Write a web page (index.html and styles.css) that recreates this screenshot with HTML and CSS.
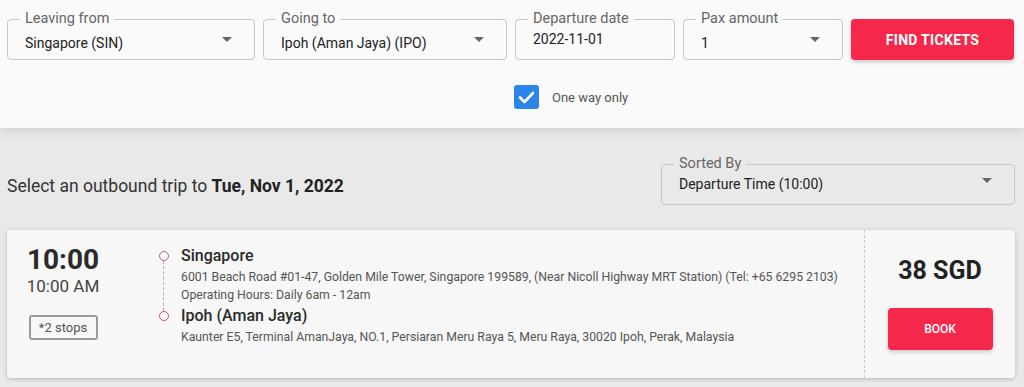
FILE: index.html
```html
<!DOCTYPE html>
<html lang="en">

<head>
    <meta charset="UTF-8">
    <meta name="viewport" content="width=device-width, initial-scale=1.0">
    <title>Find tickets</title>
    <link rel="stylesheet" href="styles.css">
</head>

<body>
    <div class="search">
        <form class="search-form">
            <fieldset class="field">
                <legend>Leaving from</legend>
                <div class="field-value">
                    <span>Singapore (SIN)</span>
                    <svg class="arrow" viewBox="0 0 10 5"><path d="M0 0l5 5 5-5z"/></svg>
                </div>
            </fieldset>
            <fieldset class="field">
                <legend>Going to</legend>
                <div class="field-value">
                    <span>Ipoh (Aman Jaya) (IPO)</span>
                    <svg class="arrow" viewBox="0 0 10 5"><path d="M0 0l5 5 5-5z"/></svg>
                </div>
            </fieldset>
            <fieldset class="field">
                <legend>Departure date</legend>
                <div class="field-value date">
                    <span>2022-11-01</span>
                </div>
            </fieldset>
            <fieldset class="field">
                <legend>Pax amount</legend>
                <div class="field-value">
                    <span>1</span>
                    <svg class="arrow" viewBox="0 0 10 5"><path d="M0 0l5 5 5-5z"/></svg>
                </div>
            </fieldset>
            <button type="button" class="btn-red find-btn">FIND TICKETS</button>

            <label class="one-way">
                <span class="checkbox">
                    <svg viewBox="0 0 24 24"><path d="M5.5 12.5l4.5 4.5 8.5-9" fill="none" stroke="#fff" stroke-width="2.6" stroke-linecap="round" stroke-linejoin="round"/></svg>
                </span>
                One way only
            </label>
        </form>
    </div>

    <div class="results">
        <div class="results-head">
            <p class="results-title">Select an outbound trip to <b>Tue, Nov 1, 2022</b></p>
            <fieldset class="field sort-field">
                <legend>Sorted By</legend>
                <div class="field-value">
                    <span>Departure Time (10:00)</span>
                    <svg class="arrow" viewBox="0 0 10 5"><path d="M0 0l5 5 5-5z"/></svg>
                </div>
            </fieldset>
        </div>

        <div class="trip">
            <div class="trip-time">
                <div class="time-big">10:00</div>
                <div class="time-small">10:00 AM</div>
                <span class="stops">*2 stops</span>
            </div>

            <div class="route">
                <span class="dot dot-from"></span>
                <div class="stop-name">Singapore</div>
                <span class="route-line"></span>
                <div class="stop-info">6001 Beach Road #01-47, Golden Mile Tower, Singapore 199589, (Near Nicoll Highway MRT Station) (Tel: +65 6295 2103)</div>
                <div class="stop-info">Operating Hours: Daily 6am - 12am</div>
                <span class="dot dot-to"></span>
                <div class="stop-name">Ipoh (Aman Jaya)</div>
                <div class="stop-info">Kaunter E5, Terminal AmanJaya, NO.1, Persiaran Meru Raya 5, Meru Raya, 30020 Ipoh, Perak, Malaysia</div>
            </div>

            <div class="trip-price">
                <div class="price">38 SGD</div>
                <button type="button" class="btn-red book-btn">BOOK</button>
            </div>
        </div>
    </div>
</body>

</html>
```

FILE: styles.css
```css
* {
    box-sizing: border-box;
}

body {
    margin: 0;
    font-family: Roboto, "Liberation Sans", Arial, sans-serif;
    color: #333;
    background-color: #e9e9e9;
}

.search {
    position: relative;
    z-index: 1;
    background-color: #fafafa;
    padding: 11px 10px 19px 7px;
    box-shadow: 0 2px 10px rgba(0, 0, 0, 0.12);
}

.search-form {
    display: grid;
    grid-template-columns: 248px 244px 160px 160px 163px;
    column-gap: 8px;
    row-gap: 25px;
}

/* outlined input */
.field {
    margin: 0;
    min-width: 0;
    height: 49px;
    padding: 0 22px 0 17px;
    border: 1px solid #c6c6c6;
    border-radius: 4px;
}

.field legend {
    margin-left: -5px;
    padding: 0 5px;
    font-size: 14.5px;
    line-height: 16px;
    color: #666;
}

.field-value {
    display: flex;
    align-items: center;
    justify-content: space-between;
    padding-top: 6px;
    font-size: 14px;
    line-height: 20px;
    color: #222;
}

.field-value.date {
    padding-top: 2px;
}

.arrow {
    width: 10px;
    height: 5px;
    fill: #666;
    flex-shrink: 0;
    margin-top: -8px;
}

.btn-red {
    border: none;
    border-radius: 4px;
    background-color: #f5284b;
    color: #fff;
    font-family: inherit;
    font-weight: 700;
    cursor: pointer;
    box-shadow: 0 2px 4px rgba(0, 0, 0, 0.2);
}

.find-btn {
    margin-top: 8px;
    height: 41px;
    font-size: 14px;
    letter-spacing: 0.3px;
}

.one-way {
    grid-column: 3 / span 2;
    display: flex;
    align-items: center;
    gap: 13px;
    margin-left: -1px;
    font-size: 13px;
    color: #555;
}

.checkbox {
    display: flex;
    width: 25px;
    height: 24px;
    border-radius: 3px;
    background-color: #2a84ea;
}

.checkbox svg {
    width: 25px;
    height: 24px;
}

.results {
    padding: 28px 9px 8px 7px;
}

.results-head {
    display: flex;
    justify-content: space-between;
    align-items: flex-end;
}

.results-title {
    margin: 0 0 7px;
    font-size: 17.5px;
    line-height: 24px;
    color: #333;
}

.results-title b {
    color: #222;
}

.sort-field {
    width: 354px;
}

.sort-field .field-value {
    padding-top: 2px;
}

.trip {
    display: flex;
    margin-top: 25px;
    height: 148px;
    background-color: #f7f7f7;
    border-radius: 4px;
    box-shadow: 0 1px 4px rgba(0, 0, 0, 0.22);
}

.trip-time {
    width: 112px;
    padding-top: 14px;
    text-align: center;
}

.time-big {
    font-size: 28px;
    line-height: 32px;
    font-weight: 700;
    color: #2a2a2a;
}

.time-small {
    font-size: 17px;
    line-height: 20px;
    color: #444;
}

.stops {
    display: inline-block;
    margin-top: 19px;
    width: 69px;
    height: 25px;
    line-height: 21px;
    border: 2px solid #9a9a9a;
    border-radius: 3px;
    font-size: 13px;
    color: #555;
}

.route {
    flex: 1;
    display: grid;
    grid-template-columns: 17px 1fr;
    grid-template-rows: 24px 18px 18px 24px 18px;
    column-gap: 9px;
    align-content: start;
    padding: 14px 0 0 36px;
}

.dot {
    grid-column: 1;
    align-self: center;
    justify-self: center;
    width: 10px;
    height: 10px;
    border: 1.5px solid #c45a78;
    border-radius: 50%;
}

.dot-from {
    grid-row: 1;
}

.dot-to {
    grid-row: 4;
}

.route-line {
    grid-column: 1;
    grid-row: 1 / 5;
    justify-self: center;
    margin: 17px 0 17px;
    border-left: 1px dashed #d79aab;
}

.stop-name {
    grid-column: 2;
    font-size: 16px;
    line-height: 24px;
    font-weight: 500;
    color: #2a2a2a;
}

.stop-info {
    grid-column: 2;
    font-size: 12.25px;
    line-height: 18px;
    color: #555;
}

.trip-price {
    width: 151px;
    border-left: 1px dashed #c8c8c8;
    display: flex;
    flex-direction: column;
    align-items: center;
    padding-top: 25px;
}

.price {
    font-size: 25px;
    line-height: 32px;
    font-weight: 700;
    color: #222;
}

.book-btn {
    margin-top: 21px;
    width: 105px;
    height: 42px;
    font-size: 12px;
    font-weight: 500;
}
```
